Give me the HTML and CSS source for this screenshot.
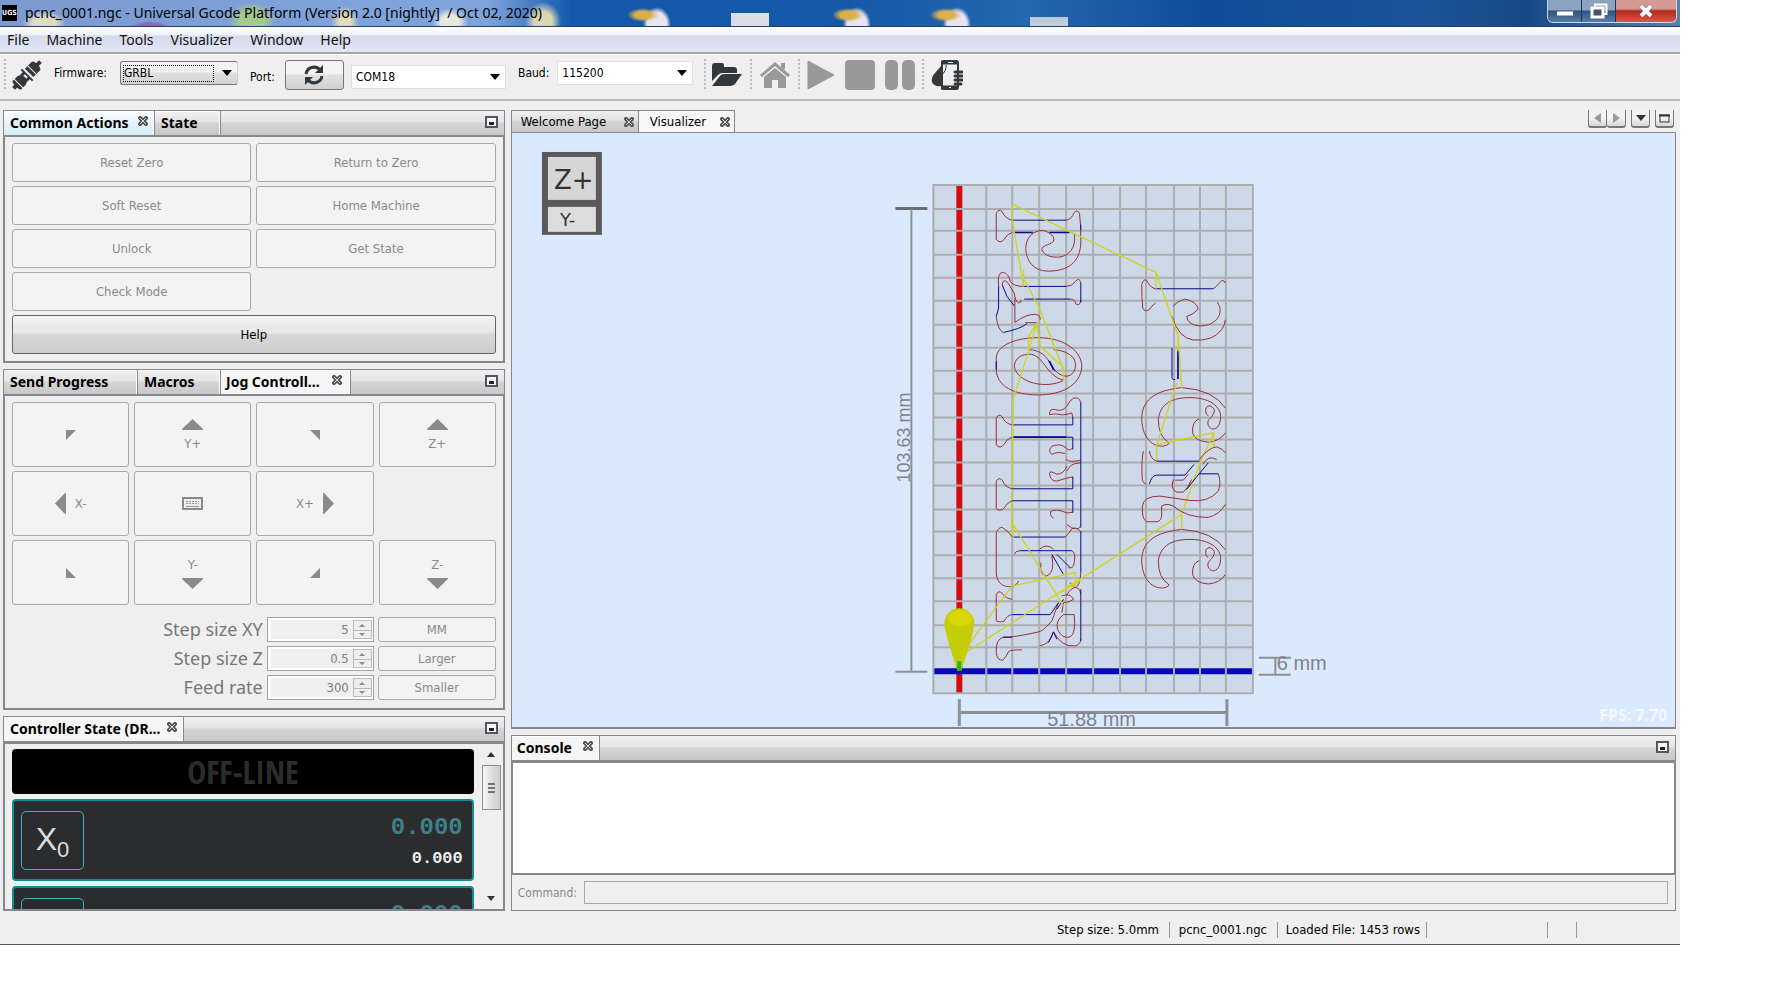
FILE: index.html
```html
<!DOCTYPE html>
<html lang="en">
<head>
<meta charset="utf-8">
<title>pcnc_0001.ngc - Universal Gcode Platform</title>
<link rel="stylesheet" href="styles.css">
</head>
<body>
<svg width="0" height="0" class="defs" aria-hidden="true">
  <symbol id="close" viewBox="0 0 10 10"><path d="M2 2L8 8M8 2L2 8" stroke="#555" stroke-width="4" stroke-linecap="square"/><path d="M2 2L8 8M8 2L2 8" stroke="#ddd" stroke-width="1"/></symbol>
  <symbol id="minimize" viewBox="0 0 13 12"><rect x="1" y="1" width="11" height="10" fill="#f4f4f4" stroke="#55555f" stroke-width="2"/><path d="M4 7.500H9" stroke="#222" stroke-width="3"/></symbol>
  <symbol id="up" viewBox="0 0 21 11"><path d="M0 11V10L10.500 0L21 10V11Z" fill="#8a8a8a"/></symbol>
  <symbol id="down" viewBox="0 0 21 11"><path d="M0 0V1L10.500 11L21 1V0Z" fill="#8a8a8a"/></symbol>
</svg>
<div class="window">
  <header class="titlebar">
    <span class="logo">UGS</span>
    <h1 class="title">pcnc_0001.ngc - Universal Gcode Platform (Version 2.0 [nightly] &nbsp;/ Oct 02, 2020)</h1>
    <div class="caption">
      <button class="cap" aria-label="Minimize"><svg width="16" height="12"><path d="M0 8.500H16" stroke="#fff" stroke-width="4"/></svg></button>
      <button class="cap" aria-label="Restore"><svg width="18" height="16"><path d="M5 3V1.500H16.500V11H14" fill="none" stroke="#fff" stroke-width="2"/><rect x="2" y="5" width="11" height="9" fill="#456" stroke="#fff" stroke-width="3"/></svg></button>
      <button class="cap cap-close" aria-label="Close"><svg width="16" height="14"><path d="M3 2L13 12M13 2L3 12" stroke="#644" stroke-width="5"/><path d="M3 2L13 12M13 2L3 12" stroke="#fff" stroke-width="4"/></svg></button>
    </div>
  </header>
  <nav class="menubar">
    <a href="#">File</a><a href="#">Machine</a><a href="#">Tools</a><a href="#">Visualizer</a><a href="#">Window</a><a href="#">Help</a>
  </nav>
  <div class="toolbar">
    <i class="grip"></i>
    <button class="tool plug" aria-label="Connect"><svg width="32" height="32" viewBox="0 0 32 32"><g transform="rotate(-45 16 16)" fill="#33383c"><rect x="-3" y="14" width="6" height="4"/><path d="M2 10H8Q13 11 13 16T8 22H2Q0 22 0 16T2 10ZM19 10H28Q31 10 31 16T28 22H19Z"/><path d="M4 8V24M23 8V24" stroke="#efefef" stroke-width="1"/><rect x="15" y="8" width="2" height="16"/><rect x="11" y="11" width="5" height="3"/><rect x="11" y="18" width="5" height="3"/><rect x="30" y="14" width="5" height="4"/></g></svg></button>
    <label class="lbl" for="fw">Firmware:</label>
    <span class="combo combo-fw"><select id="fw"><option>GRBL</option></select></span>
    <label class="lbl low" for="port">Port:</label>
    <button class="refresh" aria-label="Refresh ports"><svg width="22" height="22" viewBox="0 0 22 22"><path d="M3 10A8 8 0 0 1 17 6M19 12A8 8 0 0 1 5 16" fill="none" stroke="#33383c" stroke-width="3"/><path d="M20 1V9H12ZM2 21V13H10Z" fill="#33383c"/></svg></button>
    <span class="combo combo-port low"><select id="port"><option>COM18</option></select></span>
    <label class="lbl" for="baud">Baud:</label>
    <span class="combo combo-baud"><select id="baud"><option>115200</option></select></span>
    <i class="grip grip-a"></i>
    <button class="tool" aria-label="Open"><svg width="32" height="26" viewBox="0 0 32 26"><path d="M1 19V4Q1 1 4 1H11Q13 1 13 3V5H23Q26 5 26 8V11H11Q9 11 7 13Z" fill="#33383c"/><path d="M1 24L9 14Q10 12 13 12H31L24 22Q22 24 19 24Z" fill="#33383c"/></svg></button>
    <i class="grip"></i>
    <button class="tool" aria-label="Home"><svg width="32" height="28" viewBox="0 0 32 28"><path d="M2 15L16 3L30 15" fill="none" stroke="#999" stroke-width="3"/><path d="M22 2H26V9L22 6ZM5 16L16 7L27 16V27H19V19H13V27H5Z" fill="#999"/></svg></button>
    <i class="grip"></i>
    <div class="run">
      <button class="tool" aria-label="Play"><svg width="28" height="32"><path d="M1 2V30L27 16Z" fill="#999" stroke="#999"/></svg></button>
      <button class="tool" aria-label="Stop"><svg width="30" height="32"><rect y="1" width="30" height="30" rx="4" fill="#999"/></svg></button>
      <button class="tool" aria-label="Pause"><svg width="30" height="32"><rect y="1" width="13" height="30" rx="5" fill="#999"/><rect x="17" y="1" width="13" height="30" rx="5" fill="#999"/></svg></button>
    </div>
    <i class="grip"></i>
    <button class="tool" aria-label="Pendant"><svg width="32" height="32" viewBox="0 0 32 32"><path d="M10 7L4 14Q0 18 1 23Q3 28 10 27Z" fill="#33383c"/><rect x="11" y="2" width="16" height="28" rx="2" fill="#efefef" stroke="#33383c" stroke-width="2"/><path d="M10 3.500H27M10 28.500H27" stroke="#33383c" stroke-width="4"/><path d="M17 3.500H22M18 28.500H20" stroke="#eee" stroke-width="1"/><path d="M15 6Q16 11 10 17" fill="none" stroke="#33383c" stroke-width="1"/><path d="M24 13H31M24 17H31M24 21H31M24 25H30" stroke="#33383c" stroke-width="3" stroke-linecap="round"/></svg></button>
  </div>

  <main class="main">
    <div class="column">
      <section class="dock">
        <div class="tabs"><button class="tab focus t-common">Common Actions<svg width="10" height="10"><use href="#close"/></svg></button><button class="tab t-state">State</button><svg class="min" width="13" height="12"><use href="#minimize"/></svg></div>
        <div class="dock-body actions">
          <button class="btn" disabled>Reset Zero</button><button class="btn" disabled>Return to Zero</button>
          <button class="btn" disabled>Soft Reset</button><button class="btn" disabled>Home Machine</button>
          <button class="btn" disabled>Unlock</button><button class="btn" disabled>Get State</button>
          <button class="btn" disabled>Check Mode</button>
          <button class="btn btn-help">Help</button>
        </div>
      </section>

      <section class="dock">
        <div class="tabs"><button class="tab t-send">Send Progress</button><button class="tab t-macros">Macros</button><button class="tab active t-jog">Jog Controll...<svg width="10" height="10"><use href="#close"/></svg></button><svg class="min" width="13" height="12"><use href="#minimize"/></svg></div>
        <div class="dock-body">
          <div class="jog">
            <button class="btn" disabled aria-label="X- Y+"><svg width="10" height="10"><path d="M0 0H10L0 10Z" fill="#8a8a8a"/></svg></button>
            <button class="btn stack" disabled><svg width="21" height="11"><use href="#up"/></svg>Y+</button>
            <button class="btn" disabled aria-label="X+ Y+"><svg width="10" height="10"><path d="M0 0H10V10Z" fill="#8a8a8a"/></svg></button>
            <button class="btn stack" disabled><svg width="21" height="11"><use href="#up"/></svg>Z+</button>
            <button class="btn" disabled><svg width="11" height="21"><path d="M11 0H10L0 10.500L10 21H11Z" fill="#8a8a8a"/></svg>X-</button>
            <button class="btn" disabled aria-label="Keyboard"><svg width="21" height="13"><rect x="1" y="1" width="19" height="11" fill="#eee" stroke="#8a8a8a" stroke-width="2"/><path d="M4 4.500H17M4 6.500H17" stroke="#999" stroke-dasharray="2 1"/><path d="M4 9.500H17" stroke="#999"/></svg></button>
            <button class="btn" disabled>X+<svg width="11" height="21"><path d="M0 0H1L11 10.500L1 21H0Z" fill="#8a8a8a"/></svg></button>
            <span></span>
            <button class="btn" disabled aria-label="X- Y-"><svg width="10" height="10"><path d="M0 0V10H10Z" fill="#8a8a8a"/></svg></button>
            <button class="btn stack" disabled>Y-<svg width="21" height="11"><use href="#down"/></svg></button>
            <button class="btn" disabled aria-label="X+ Y-"><svg width="10" height="10"><path d="M10 0V10H0Z" fill="#8a8a8a"/></svg></button>
            <button class="btn stack" disabled>Z-<svg width="21" height="11"><use href="#down"/></svg></button>
          </div>
          <div class="steps">
            <label for="sxy">Step size XY</label><span class="spin"><input id="sxy" type="number" value="5" disabled><i class="arrows"><b></b><b></b></i></span><button class="btn" disabled>MM</button>
            <label for="sz">Step size Z</label><span class="spin"><input id="sz" type="number" value="0.5" disabled><i class="arrows"><b></b><b></b></i></span><button class="btn" disabled>Larger</button>
            <label for="fr">Feed rate</label><span class="spin"><input id="fr" type="number" value="300" disabled><i class="arrows"><b></b><b></b></i></span><button class="btn" disabled>Smaller</button>
          </div>
        </div>
      </section>

      <section class="dock dock-dro">
        <div class="tabs"><button class="tab active t-dro">Controller State (DR...<svg width="10" height="10"><use href="#close"/></svg></button><svg class="min" width="13" height="12"><use href="#minimize"/></svg></div>
        <div class="dock-body dro">
          <div class="dro-list">
            <div class="offline">OFF-LINE</div>
            <div class="axis"><button class="zero">X<sub>0</sub></button><div class="vals"><span class="work">0.000</span><span class="mach">0.000</span></div></div>
            <div class="axis"><button class="zero" aria-label="Reset Y"></button><div class="vals"><span class="work">0.000</span></div></div>
          </div>
          <div class="scroll"><i class="sb-up"></i><div class="thumb"><i></i><i></i><i></i></div><i class="sb-down"></i></div>
        </div>
      </section>
    </div>

    <div class="column">
      <section class="editor">
        <div class="etabs">
          <button class="etab e-welcome">Welcome Page<svg width="10" height="10"><use href="#close"/></svg></button><button class="etab active e-vis">Visualizer<svg width="10" height="10"><use href="#close"/></svg></button>
          <div class="enav">
            <button class="nb" aria-label="Previous"><svg width="7" height="10"><path d="M7 0V10L0 5Z" fill="#999"/></svg></button><button class="nb nb-next" aria-label="Next"><svg width="7" height="10"><path d="M0 0V10L7 5Z" fill="#999"/></svg></button>
            <button class="nb nb-gap" aria-label="Tab list"><svg width="10" height="6"><path d="M0 0H10L5 6Z" fill="#333"/></svg></button>
            <button class="nb nb-gap" aria-label="Maximize"><svg width="11" height="9"><rect x="1" y="1" width="9" height="7" fill="none" stroke="#333" stroke-width="1"/><path d="M0 1.500H11" stroke="#333" stroke-width="2"/></svg></button>
          </div>
        </div>
        <div class="view">
          <svg class="scene" viewBox="511 133 1165 595">
            <g font-family="DejaVu Sans, sans-serif" fill="#333">
              <rect x="541" y="152" width="60" height="83" fill="#5a5a5a"/>
              <rect x="547" y="157" width="48" height="43" fill="#d6d6d6"/><rect x="547" y="207" width="48" height="25" fill="#dcdcdc"/>
              <text x="553" y="189" font-size="26">Z+</text><text x="559" y="226" font-size="18">Y-</text>
            </g>
            <rect x="933" y="185" width="320" height="509" fill="#cdd9e9"/>
            <path d="M959 185V694" stroke="#d40b0e" stroke-width="6"/>
            <path d="M933 672H1253" stroke="#0808b8" stroke-width="6"/>
            <path fill="none" stroke="#adadad" stroke-width="2" d="M933 184V695M986 184V695M1012 184V695M1039 184V695M1066 184V695M1093 184V695M1120 184V695M1146 184V695M1174 184V695M1200 184V695M1226 184V695M1253 184V695M932 185H1254M932 209H1254M932 231H1254M932 255H1254M932 278H1254M932 301H1254M932 325H1254M932 348H1254M932 371H1254M932 394H1254M932 418H1254M932 440H1254M932 463H1254M932 486H1254M932 510H1254M932 532H1254M932 556H1254M932 579H1254M932 602H1254M932 626H1254M932 648H1254M932 694H1254"/>
            <g fill="none" stroke-width="3">
              <g transform="translate(880 170) scale(.333333)">
                <path stroke="#9b2c3c" d="M396 151Q374 146 366 126Q356 115 348 130V208Q360 224 372 208Q380 192 396 188M558 151Q575 148 582 128Q592 118 598 130Q603 165 602 215C602 280 560 304 505 304C450 304 435 260 437 230C440 190 475 180 490 182C510 188 525 200 520 215C505 228 485 225 485 240C495 262 520 262 535 262C565 260 590 235 582 190M355 350Q350 305 370 308Q385 312 390 335Q400 350 430 350M602 340Q598 320 586 335Q575 350 558 350M570 388Q585 388 586 402Q600 412 602 390M366 345Q368 325 382 338L402 370Q405 395 415 400Q424 400 422 390M348 440Q352 480 370 490M404 385V458Q440 432 465 434Q482 436 480 450M435 459H470M348 570C345 530 400 504 475 504C560 504 605 550 605 590C602 650 540 676 475 676C400 676 350 650 348 600ZM402 590C405 560 430 552 455 554C490 560 500 620 550 632C500 660 410 640 402 590M445 540C480 540 500 560 515 590Q535 620 560 620C590 615 590 580 580 565Q560 542 520 540M396 766Q374 762 366 742Q356 730 348 745V826Q360 840 372 824Q378 808 396 803M602 700Q598 680 580 686Q570 690 560 710Q545 728 525 720Q508 715 508 735Q525 730 545 736Q560 735 575 730L578 745M578 835Q565 848 558 835Q540 820 515 830Q502 845 515 855Q530 845 555 852M558 870Q570 880 602 872M560 905Q570 880 602 880M785 345Q790 325 800 332Q812 355 826 357M826 400Q815 408 808 420Q795 428 788 415Q785 380 785 345M1000 357Q1010 350 1020 338Q1030 325 1036 340M880 410Q890 395 915 388Q950 395 955 418Q940 435 920 440Q922 465 960 469C1010 468 1035 430 1012 397M876 440Q895 505 940 511Q1000 515 1025 480Q1036 465 1036 450"/>
                <path id="toolG" stroke="#9b2c3c" d="M1036 715Q1000 660 905 654C800 665 785 710 785 750C788 810 820 832 850 830Q872 825 865 818Q835 800 835 750C840 700 880 684 930 684C1000 684 1025 720 1022 745C1020 775 1005 780 995 778Q980 770 985 752Q1005 735 1003 720Q990 700 978 715Q975 735 985 738M958 748Q935 755 938 790Q945 815 985 818Q1020 815 1036 790"/>
                <use href="#toolG" y="426"/>
                <path stroke="#08088c" d="M396 151H558M430 350H558M432 388H570M602 340V398M366 345L380 380L402 408M355 350V415L348 440M370 488Q420 478 440 462M505 572L525 605M396 766H578V743M396 803H578V840M602 700V1075M826 357H1000M876 535V620Q874 630 886 630M348 575V600M602 165V180"/>
                <path stroke="#08088c" stroke-width="5" d="M400 188H458M508 188H568M400 803H558M894 540V628M508 575L520 600"/>
                <path stroke="#cdd41c" stroke-width="4" d="M396 103L828 308L895 500L905 655M828 308V357M396 103V150L430 350M432 330L475 410L550 600V635M430 300V350M470 460L445 500V545L470 460L480 530L552 595M445 545L398 690L395 1100M890 640L830 825V875M830 825L1000 790V830M1003 790L960 880L905 1035V1080M894 500V545M1003 820V835"/>
              </g>
              <g transform="translate(880 440) scale(.333333)">
                <path stroke="#9b2c3c" d="M790 35Q784 60 786 110Q786 130 798 134M808 35Q812 60 830 65M958 60Q985 25 1010 22Q1030 28 1036 40M1010 60Q985 45 968 75M1015 103Q1025 130 1015 155Q985 190 930 183L840 170Q790 170 787 200Q785 240 800 247H830Q845 245 845 225V200Q860 190 880 200Q920 235 985 234Q1020 225 1036 195M880 120Q870 150 890 158H910Q925 145 935 120M885 122H910L925 105M560 80Q550 105 530 104Q508 92 508 102Q510 125 530 125Q560 115 578 112M578 218Q560 225 545 215Q530 208 512 215Q508 230 520 236M396 148Q374 144 366 122Q356 112 348 125V208Q360 218 372 205Q380 190 396 184M396 293Q385 275 366 264Q356 262 348 280V400C350 440 380 446 400 440Q412 435 415 425M555 293Q565 285 575 268Q590 262 600 275M602 400Q600 440 585 445Q575 440 570 430M560 255Q575 270 590 268Q600 268 602 255M478 330Q500 310 520 330M515 350Q525 400 500 410Q478 410 482 370M402 345Q405 334 420 334M575 334Q588 340 582 370Q580 390 565 385M396 480Q375 478 366 462Q356 452 348 465V545Q360 552 372 545Q380 528 396 526M558 470Q575 440 590 445Q602 450 602 465M550 526Q525 545 532 570Q545 600 570 593Q588 585 582 526H550M535 490L515 545Q490 575 475 578Q400 595 370 594Q345 600 348 640Q350 665 368 663Q380 650 385 637Q395 631 425 632M478 620Q510 615 520 578Q545 625 585 620Q602 615 602 600M545 470Q570 460 580 480Q570 490 550 490L545 520"/>
                <path stroke="#08088c" d="M830 65H958M808 134Q815 107 830 107H915L942 75M985 70L935 130L920 150M958 103H1015M396 148H578V112M396 184H578V220M400 293H555M420 334H575M515 345L550 405M530 345L570 385M602 275V400M396 526H510L535 490M530 510L550 480M602 450V605M368 594H395M505 610L520 578L530 600"/>
                <path stroke="#cdd41c" stroke-width="4" d="M905 225L240 650L395 440L585 400V440M395 250L550 500M398 250V290M540 460L600 425M560 440H590"/>
                <path stroke="#0fc41a" stroke-width="14" d="M237 640V695"/>
              </g>
            </g>
            <path d="M944 624A15 15 0 0 1 974 624Q973 636 961 671H957Q945 636 944 624Z" fill="#c4cd05"/>
            <ellipse cx="960" cy="619" rx="12" ry="8" fill="#d8d800"/>
            <path d="M957 662H961V671H957Z" fill="#22b31a"/>
            <g fill="none" stroke="#8b9094">
              <path stroke-width="3" d="M895 208.500H927" stroke="#686c72"/><path stroke-width="2" d="M911 209V672"/><path stroke-width="2" d="M895 672.500H927"/>
              <path stroke-width="3" d="M959 700V727M1227 700V727M959 713.500H1227"/>
              <path stroke-width="2" d="M1259 658.500H1291M1259 675.500H1291M1275.500 659V675"/>
            </g>
            <g font-family="Liberation Sans, Arial, sans-serif" fill="#7d8389">
              <text transform="translate(910 483) rotate(-90)" font-size="18">103.63 mm</text>
              <text x="1047" y="727" font-size="20">51.88 mm</text>
              <text x="1277" y="671" font-size="20">6 mm</text>
            </g>
            <text x="1668" y="722" text-anchor="end" font-family="Noto Sans, sans-serif" font-weight="bold" font-size="16" fill="#f4f8ff">FPS: 7.70</text>
          </svg>
        </div>
      </section>

      <section class="dock console">
        <div class="tabs"><button class="tab active t-console">Console<svg width="10" height="10"><use href="#close"/></svg></button><svg class="min" width="13" height="12"><use href="#minimize"/></svg></div>
        <textarea class="log" readonly aria-label="Console output"></textarea>
        <div class="command"><label for="cmd">Command:</label><input id="cmd" type="text" disabled></div>
      </section>
    </div>
  </main>
  <footer class="status">
    <span class="s-step">Step size: 5.0mm</span><span class="s-file">pcnc_0001.ngc</span><span class="s-rows">Loaded File: 1453 rows</span><span class="s-empty"></span><span class="s-small"></span>
  </footer>
</div>
</body>
</html>
```
FILE: styles.css
```css
* { box-sizing: border-box; }
body {
  margin: 0;
  min-height: 100vh;
  padding: 0 99px 57px 0;
  display: flex;
  background: #fff;
  color: #000;
  font-family: "DejaVu Sans Condensed", "DejaVu Sans", sans-serif;
  font-size: 12px;
}
button, input, select, textarea { font: inherit; color: inherit; margin: 0; }
button { padding: 0; border: 0; background: none; }
.defs { position: absolute; }
svg { display: block; flex: none; }
.window {
  flex: 1;
  min-width: 0;
  display: flex;
  flex-direction: column;
  background: #efefef;
  border-bottom: 1px solid #55575c;
}

/* title bar */
.titlebar {
  height: 27px;
  display: flex;
  align-items: center;
  padding: 0 3px 0 2px;
  border-bottom: 1px solid #24406c;
  background:
    radial-gradient(ellipse 16px 7px at 643px 15px, #d9b04c 50%, transparent),
    radial-gradient(ellipse 16px 7px at 848px 15px, #d9b04c 50%, transparent),
    radial-gradient(ellipse 16px 7px at 946px 15px, #d9b04c 50%, transparent),
    radial-gradient(ellipse 14px 18px at 657px 25px, #e8e4f0 70%, transparent),
    radial-gradient(ellipse 14px 18px at 857px 25px, #e8e4f0 70%, transparent),
    radial-gradient(ellipse 14px 18px at 957px 25px, #e8e4f0 70%, transparent),
    linear-gradient(#d8dfe6, #d8dfe6) 731px 13px / 38px 14px no-repeat,
    linear-gradient(#b8c8d8, #c8d2de) 1030px 17px / 38px 10px no-repeat,
    radial-gradient(ellipse 18px 20px at 543px 22px, #d8d8b0 50%, transparent),
    radial-gradient(ellipse 18px 14px at 450px 22px, #e8e8e0 50%, transparent),
    radial-gradient(ellipse 14px 16px at 345px 22px, #e0dcb8 40%, transparent),
    radial-gradient(ellipse 24px 18px at 252px 20px, #a8c88c 50%, transparent),
    radial-gradient(ellipse 20px 5px at 150px 26px, #8468b0 50%, transparent),
    radial-gradient(ellipse 22px 14px at 44px 24px, #e0dcc4 50%, transparent),
    linear-gradient(90deg, #7c9ad0 0, #7fa4dc 25%, #7fa4dc 29%, #1458ac 34%, #1458a8 50%, #2468b0 61%, #0e4c9a 72%, #1c5496 85%, #174888 91%, #5a80ac);
}
.logo {
  width: 15px;
  height: 16px;
  background: #000;
  color: #fff;
  font-size: 7px;
  font-weight: bold;
  line-height: 16px;
  text-align: center;
}
.title { margin: 0 auto 0 8px; font: 14px/24px "Noto Sans", sans-serif; white-space: nowrap; }
.caption {
  align-self: flex-start;
  display: flex;
  height: 23px;
  border: 1px solid #c8d8e8;
  border-top: 0;
  border-radius: 0 0 6px 6px;
  overflow: hidden;
}
.cap { width: 34px; display: grid; place-items: center; border-right: 1px solid #21344f; background: linear-gradient(#8ba3bf 45%, #2f5480 50%, #5a7ca4); }
.cap-close { width: 60px; border: 0; background: linear-gradient(#d59a94 40%, #b8281c 50%, #d45c4c); }

/* menu bar */
.menubar {
  height: 27px;
  padding-left: 7px;
  display: flex;
  gap: 17px;
  align-items: center;
  font: 14px/24px "Noto Sans", sans-serif;
  border-bottom: 2px solid #a2a4aa;
  background: linear-gradient(#fff, #eef1f9 32%, #d5dbed 36%, #e2e6f5);
}
.menubar a { color: #111; text-decoration: none; }

/* toolbar */
.toolbar {
  height: 47px;
  display: flex;
  align-items: center;
  padding: 0 4px 4px;
  border-bottom: 2px solid #b9b9b9;
  border-top: 1px solid #fff;
}
.grip { width: 2px; height: 32px; margin: 0 7px; background: repeating-linear-gradient(#bbb 0 2px, transparent 2px 4px); }
.grip:first-child { margin: 0; }
.grip-a { margin-left: 11px; margin-right: 5px; }
.plug { margin: 0 11px 0 5px; }
.lbl { margin-bottom: 4px; }
.low, .lbl.low { margin-top: 4px; margin-bottom: 0; }
.combo { display: grid; align-items: center; margin-bottom: 4px; height: 24px; background: #fff; border: 1px solid #e0e0e0; }
.combo.low { margin-bottom: 0; }
.combo > select { grid-area: 1 / 1; width: 100%; height: 100%; appearance: none; border: 0; padding: 0 4px; background: none; outline: 0; }
.combo::after { content: ""; grid-area: 1 / 1; justify-self: end; margin-right: 5px; border: 5px solid transparent; border-top: 6px solid #000; border-bottom: 0; pointer-events: none; }
.combo-fw { width: 118px; margin-left: 8px; margin-right: 12px; border: 1px solid #777; border-right-color: #ccc; border-radius: 3px; padding-left: 2px; background: linear-gradient(#f2f2f2 45%, #e0e0e0 50%, #d2d2d2); }
.combo.combo-fw { margin-left: 13px; }
.combo-fw > select { width: 91px; height: 17px; padding: 0; border: 1px dotted #000; }
.refresh { width: 59px; height: 30px; margin: 0 7px 0 10px; display: grid; place-items: center; border: 1px solid #777; border-radius: 3px; background: linear-gradient(#f4f4f4 45%, #e2e2e2 50%, #d0d0d0); }
.combo-port { width: 155px; margin-right: 12px; }
.combo-baud { width: 136px; margin-left: 8px; }
.run { display: flex; gap: 10px; }

/* layout */
.main { flex: 1; display: grid; grid-template-columns: 301fr 699fr; gap: 6px; padding: 9px 4px 0 3px; }
.column { display: flex; flex-direction: column; gap: 6px; min-width: 0; }
.dock { border-top: 1px solid #85888e; }
.tabs { height: 25px; display: flex; align-items: stretch; border: 1px solid #85888e; border-top: 0; background: linear-gradient(#f0f0f0, #e4e4e4 45%, #d4d4d4 50%, #c9c9c9); }
.tab {
  display: flex;
  align-items: center;
  justify-content: space-between;
  padding: 0 6px;
  border-right: 1px solid #85888e;
  box-shadow: inset -1px 1px #fff;
  font: bold 14px/24px "Noto Sans", sans-serif;
  white-space: nowrap;
}
.tab svg { margin-bottom: 4px; }
.tab.active { background: #f5f5f5; }
.tab.focus { background: linear-gradient(#fafdff, #e6f5fb 50%, #d4edf6); }
.t-common { width: 151px; }
.t-state { width: 66px; }
.t-send { width: 134px; }
.t-macros { width: 83px; }
.t-jog { width: 130px; padding: 0 8px 0 5px; }
.t-dro { width: 180px; }
.t-console { width: 88px; padding: 0 6px 0 5px; }
.min { margin: 5px 6px 0 auto; }
.dock-body { border: 2px solid #85888e; border-top-width: 1px; padding: 6px 7px 7px; }

.btn {
  display: flex;
  align-items: center;
  justify-content: center;
  gap: 9px;
  color: #8a8a8a;
  background: #f3f3f3;
  border: 1px solid #a9a9a9;
  border-radius: 3px;
  font-size: 13px;
}
.actions { display: grid; grid-template-columns: 1fr 1fr; grid-auto-rows: 39px; gap: 4px 5px; }
.btn-help { grid-column: 1 / -1; color: #000; border-color: #666; background: linear-gradient(#f4f4f4, #e6e6e6 45%, #d8d8d8 50%, #cdcdcd); }

.jog { display: grid; grid-template-columns: repeat(4, 1fr); grid-auto-rows: 65px; gap: 4px 5px; }
.stack { flex-direction: column; gap: 6px; }
.steps { display: grid; grid-template-columns: 1fr 107px 118px; grid-auto-rows: 25px; gap: 4px; padding: 12px 0 1px; }
.steps label { text-align: right; color: #777; font: 18px/25px "Noto Sans", sans-serif; }
.spin { display: flex; padding: 2px 1px 2px 3px; background: #fff; border: 1px solid #a2a2a2; }
.spin input { flex: 1; min-width: 0; padding: 0 4px; text-align: right; border: 0; background: #efefef; color: #808080; appearance: textfield; font-size: 13px; }
.spin input::-webkit-inner-spin-button { display: none; }
.arrows { width: 19px; display: grid; grid-template-rows: 1fr 1fr; border: 1px solid #bbb; background: #eee; }
.arrows b { display: grid; place-items: center; }
.arrows b + b { border-top: 1px solid #bbb; }
.arrows b::after { content: ""; border: 3px solid transparent; border-bottom: 3px solid #888; border-top: 0; }
.arrows b + b::after { border-top: 3px solid #888; border-bottom: 0; }

/* controller state */
.dock-dro { flex: 1; display: flex; flex-direction: column; }
.dro { flex: 1 1 0; min-height: 160px; display: flex; gap: 8px; overflow: hidden; padding: 5px 2px 0 7px; border-width: 2px; }
.dro-list { flex: 1; height: 0; }
.offline { height: 45px; border-radius: 4px; background: #000; color: #2c2c2c; text-align: center; font: bold 32px/46px "Open Sans Condensed", "Liberation Sans Narrow", sans-serif; }
.axis { height: 82px; margin-top: 5px; display: flex; justify-content: space-between; padding: 10px 9px 10px 7px; background: #2b2c2e; border: 2px solid #0d8c99; border-radius: 4px; }
.zero { width: 63px; height: 59px; border: 1px solid #3cb4c8; border-radius: 5px; color: #ddd; font: 32px/40px "Liberation Sans Narrow", "Liberation Sans", sans-serif; }
.zero sub { font-size: 22px; line-height: 22px; }
.vals { display: flex; flex-direction: column; align-items: flex-end; font-family: "Liberation Mono", monospace; font-weight: bold; }
.work { font-size: 24px; line-height: 34px; color: #3f7f88; }
.mach { font-size: 17px; line-height: 28px; color: #eee; }
.scroll { width: 19px; display: flex; flex-direction: column; align-items: center; padding-bottom: 8px; }
.sb-up { margin-top: 3px; border: 4px solid transparent; border-bottom: 5px solid #333; border-top: 0; }
.thumb { width: 19px; height: 45px; margin-top: 8px; margin-bottom: auto; display: flex; flex-direction: column; align-items: center; justify-content: center; gap: 2px; border: 1px solid #8e8e8e; background: linear-gradient(90deg, #f4f4f4, #e0e0e0 50%, #ccc); }
.thumb i { width: 7px; height: 2px; background: #777; }
.sb-down { border: 4px solid transparent; border-top: 5px solid #333; border-bottom: 0; }

/* visualizer */
.editor { flex: 1; display: flex; flex-direction: column; }
.etabs { height: 22px; display: flex; }
.etab { display: flex; align-items: center; justify-content: space-between; padding: 0 4px 0 9px; border: 1px solid #85888e; border-bottom: 0; border-left-width: 0; background: linear-gradient(#f0f0f0, #e0e0e0 45%, #d2d2d2 50%, #c9c9c9); font-size: 13px; }
.e-welcome { width: 128px; border-left-width: 1px; }
.e-vis { width: 96px; padding-left: 11px; }
.etab.active { background: #f6f6f6; }
.enav { margin-left: auto; display: flex; padding-right: 2px; }
.nb { width: 19px; height: 18px; display: grid; place-items: center; border: 1px solid #777; border-top: 0; border-radius: 0 0 3px 3px; border-bottom-width: 2px; background: linear-gradient(#f2f2f2 50%, #d8d8d8); }
.nb-next { border-left: 0; }
.nb-gap { margin-left: 5px; }
.view { flex: 1; display: flex; border: 1px solid #85888e; border-bottom-width: 2px; background: #dbe9fe; }
.scene { width: 100%; flex: 1; min-height: 0; }

/* console */
.console { display: flex; flex-direction: column; }
.log { height: 114px; border: 2px solid #85888e; border-bottom-width: 2px; background: #fff; resize: none; outline: 0; }
.command { height: 36px; display: flex; align-items: center; gap: 7px; padding: 0 7px 0 6px; border: 1px solid #85888e; border-top: 0; color: #888; }
.command input { flex: 1; height: 23px; border: 1px solid #a9a9a9; background: #efefef; }

/* status bar */
.status { height: 33px; padding: 4px 103px 0 0; display: flex; justify-content: flex-end; align-items: center; font-size: 13px; }
.status span { height: 16px; line-height: 16px; border-right: 1px solid #999; padding-right: 6px; white-space: nowrap; }
.s-step { text-align: right; width: 118px; }
.status .s-step { padding-right: 10px; }
.s-file { text-align: right; width: 108px; }
.status .s-file { padding-right: 10px; }
.s-rows { text-align: right; width: 149px; }
.s-empty { width: 121px; }
.s-small { width: 29px; }
```
